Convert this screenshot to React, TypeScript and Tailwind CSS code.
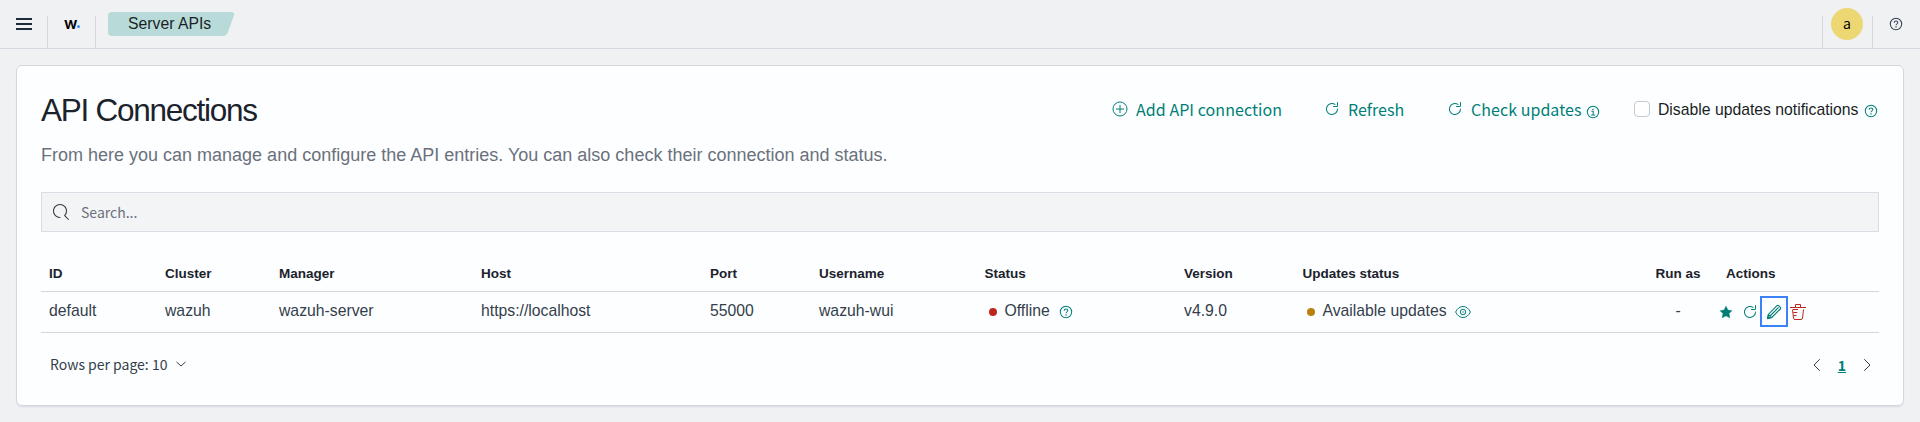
import type { ReactNode } from 'react';

const SOURCE = "font-['Noto_Sans_CJK_JP','Noto_Sans',sans-serif]";

type IconProps = { className?: string; size?: number; children: ReactNode };

function Icon({ className = '', size = 16, children }: IconProps) {
  return (
    <svg width={size} height={size} viewBox="0 0 16 16" fill="none" stroke="currentColor" className={`shrink-0 ${className}`}>
      {children}
    </svg>
  );
}

const Refresh = ({ className }: { className?: string }) => (
  <Icon className={className}>
    <path
      fill="currentColor"
      stroke="none"
      d="M11.228 2.942a.5.5 0 11-.538.842A5 5 0 1013 8a.5.5 0 111 0 6 6 0 11-2.772-5.058zM14 1.5v3A1.5 1.5 0 0112.5 6h-3a.5.5 0 010-1h3a.5.5 0 00.5-.5v-3a.5.5 0 111 0z"
    />
  </Icon>
);

const Help = ({ className }: { className?: string }) => (
  <Icon className={className} size={14}>
    <circle cx="8" cy="8" r="6.5" strokeWidth="1.150" />
    <path d="M5.900 6.500C5.900 5.200 6.800 4.500 8 4.500s2.100.7 2.100 1.900c0 1.400-2.100 1.500-2.100 3.100" strokeWidth="1.150" />
    <path d="M7.300 10.600h1.400v1.300H7.300z" fill="currentColor" stroke="none" />
  </Icon>
);

const Info = ({ className }: { className?: string }) => (
  <Icon className={className} size={14}>
    <circle cx="8" cy="8" r="6.5" strokeWidth="1.150" />
    <path d="M6.200 7.200h2v4.300M5.900 11.500h4.500" strokeWidth="1.150" />
    <path d="M7.200 4.200h1.500v1.400H7.200z" fill="currentColor" stroke="none" />
  </Icon>
);

const columns = [
  { title: 'ID', cell: 'default' },
  { title: 'Cluster', cell: 'wazuh' },
  { title: 'Manager', cell: 'wazuh-server' },
  { title: 'Host', cell: 'https://localhost' },
  { title: 'Port', cell: '55000' },
  { title: 'Username', cell: 'wazuh-wui' },
];

const GRID = 'grid grid-cols-[116px_114px_202px_229px_109px_165.500px_199.500px_118.500px_345.500px_76px_163px] border-b border-[#d3d7dc]';

function HeaderBar() {
  return (
    <header className="flex h-[49px] items-start border-b border-[#d3d7df]">
      <div className="flex h-12 w-12 shrink-0 items-center justify-between">
        <div className="ml-4 flex w-4 flex-col gap-[3px]">
          <div className="h-0.5 bg-[#1f2b3d]" />
          <div className="h-0.5 bg-[#1f2b3d]" />
          <div className="h-0.5 bg-[#1f2b3d]" />
        </div>
        <div className="mt-4 h-8 w-px bg-[#d3d8e0]" />
      </div>
      <div className="flex h-12 w-12 shrink-0 items-center">
        <div className="flex flex-1 items-center pb-0.5 pl-4 font-['Inter',sans-serif] text-base leading-4 font-semibold text-black">
          <span className="w-[12.500px] tracking-[-0.5px]">w</span>
          <span className="mt-[7px] h-[3.500px] w-[3.500px] shrink-0 rounded-full bg-[#3595f9]" />
        </div>
        <div className="mt-4 h-8 w-px bg-[#d3d8e0]" />
      </div>
      <div className="relative mt-3 ml-3 h-6 w-[127px] shrink-0">
        <svg className="absolute inset-0" width="127" height="24">
          <path d="M4 0H123Q127.200 0 126 3.500L120 20Q118.500 24 115 24H4Q0 24 0 20V4Q0 0 4 0Z" fill="#b8dbd9" />
        </svg>
        <div className="relative pl-5 text-[15.750px] leading-[23px] text-[#1a1f26]">Server APIs</div>
      </div>
      <div className="ml-auto flex h-12 items-center">
        <div className="mt-4 h-8 w-px bg-[#d3d8e0]" />
        <div className={`mx-2 flex h-8 w-8 items-center justify-center rounded-full bg-[#edd772] text-sm leading-4 text-black ${SOURCE}`}>
          <span className="pb-0.5">a</span>
        </div>
        <div className="mt-4 ml-px h-8 w-px bg-[#d3d8e0]" />
        <Help className="mr-[17px] ml-[16px] text-[#343f4f]" />
      </div>
    </header>
  );
}

export default function App() {
  return (
    <div className="flex h-[422px] w-[1920px] flex-col overflow-hidden bg-[#f0f1f3] font-['Liberation_Sans',Arial,sans-serif]">
      <HeaderBar />
      <main className="mx-4 mt-4 h-[341px] rounded-md border border-[#d3d8de] bg-[#fdfeff] px-6 shadow-[0_2px_2px_-1px_rgba(152,162,179,0.3)]">
        <div className="mt-[24px] flex h-10 items-center">
          <h1 className="text-[31.5px] leading-10 tracking-[-1.26px] text-[#1a222c]">API Connections</h1>
          <div className={`ml-auto flex items-center pb-[2px] text-base leading-6 text-[#007e77] ${SOURCE}`}>
            <div className="flex w-[212px] items-center">
              <Icon>
                <circle cx="8" cy="8" r="7" />
                <path d="M8 4v8M4 8h8" />
              </Icon>
              <span className="ml-2 tracking-[0.060px]">Add API connection</span>
            </div>
            <div className="flex w-[123px] items-center">
              <Refresh />
              <span className="ml-2">Refresh</span>
            </div>
            <div className="flex w-[187px] items-center">
              <Refresh />
              <span className="ml-2 tracking-[0.050px]">Check updates</span>
              <Info className="mt-[5px] ml-[5px]" />
            </div>
          </div>
          <div className="flex w-[245px] items-center text-[15.750px] leading-6 whitespace-nowrap text-[#1a1f26]">
            <div className="mt-[-2px] h-4 w-4 shrink-0 rounded border border-[#c5c9d0] bg-white" />
            <span className="ml-2">Disable updates notifications</span>
            <Help className="mt-px ml-[5px] text-[#007e77]" />
          </div>
        </div>
        <p className="mt-[12px] text-[18px] leading-[27px] text-[#6a717c]">
          From here you can manage and configure the API entries. You can also check their connection and status.
        </p>
        <div className={`mt-[23px] flex h-10 items-center border border-[#d9dde5] bg-[#f3f4f6] pl-[11px] text-sm text-[#69707d] ${SOURCE}`}>
          <Icon className="text-[#343741]">
            <path
              fill="currentColor"
              stroke="none"
              d="M11.271 11.978l3.872 3.873a.502.502 0 00.708 0 .502.502 0 000-.708l-3.565-3.564c2.38-2.747 2.267-6.923-.342-9.532-2.73-2.73-7.17-2.73-9.898 0-2.728 2.729-2.728 7.17 0 9.9a6.955 6.955 0 004.949 2.05.5.5 0 000-1 5.96 5.96 0 01-4.242-1.757 6.01 6.01 0 010-8.486 6.004 6.004 0 018.484 0 6.01 6.01 0 010 8.486.5.5 0 00.034.738z"
            />
          </Icon>
          <span className="ml-3">Search...</span>
        </div>
        <div className={`mt-[24px] h-[36px] items-center text-[13.500px] leading-5 font-bold text-[#1a222c] ${GRID}`}>
          {columns.map((c) => (
            <div key={c.title} className="pl-2">{c.title}</div>
          ))}
          <div className="pl-2">Status</div>
          <div className="pl-2">Version</div>
          <div className="pl-2">Updates status</div>
          <div className="text-center">Run as</div>
          <div className="pl-[10px]">Actions</div>
        </div>
        <div className={`h-[41px] items-center text-[15.750px] leading-6 text-[#343f4b] ${GRID}`}>
          {columns.map((c) => (
            <div key={c.title} className="pb-0.5 pl-2">{c.cell}</div>
          ))}
          <div className="flex items-center pl-3">
            <span className="h-2 w-2 rounded-full bg-[#bd271e]" />
            <span className="ml-2 pb-0.5">Offline</span>
            <Help className="ml-[9px] text-[#007e77]" />
          </div>
          <div className="pb-0.5 pl-2">v4.9.0</div>
          <div className="flex items-center pl-3">
            <span className="h-2 w-2 rounded-full bg-[#b9810b]" />
            <span className="ml-2 pb-0.5">Available updates</span>
            <Icon className="ml-2 text-[#007e77]">
              <path d="M.6 8C2.200 4.600 4.800 2.500 8 2.500S13.800 4.600 15.400 8C13.800 11.400 11.200 13.500 8 13.500S2.200 11.400.6 8Z" />
              <circle cx="8" cy="8" r="2.750" />
              <circle cx="8" cy="8" r="0.750" fill="currentColor" stroke="none" />
            </Icon>
          </div>
          <div className="pb-0.5 text-center">-</div>
          <div className="mt-[-1px] flex items-center pl-[2px] text-[#017d73]">
            <Icon className="mt-px">
              <path d="M8 2.200l1.900 3.900 4 .6-2.900 2.900.8 4.200L8 11.800 4.200 13.800l.8-4.200-2.900-2.900 4-.6z" fill="currentColor" strokeWidth="0.500" />
            </Icon>
            <Refresh className="ml-2" />
            <div className="ml-[2px] flex h-[31px] w-7 shrink-0 items-center justify-center border-2 border-[#3b82f6]">
              <Icon>
                <path d="M11 1.700L2.300 10.400 1.500 14.500l4.100-.8L14.300 5a1.200 1.200 0 0 0 0-1.700L12.700 1.700a1.200 1.200 0 0 0-1.700 0ZM12.600 3.400L4 12M2.300 10.500L5.500 13.700" strokeWidth="1.100" />
                <path d="M1.200 14.800l.6-3.400 2.800 2.800z" fill="currentColor" stroke="none" />
              </Icon>
            </div>
            <Icon className="ml-[2px] text-[#bd271e]">
              <path d="M0 3.500h16M5.500 3.500V.5h5v3M2.500 5.500l1 8.500q.2 1.500 1.500 1.500h6q1.300 0 1.500-1.500l1-8.500M3 5.500h5M3.300 8.500h4M3.600 11.500h3" />
            </Icon>
          </div>
        </div>
        <div className={`mt-[19px] flex h-6 items-center justify-between text-sm leading-6 text-[#343f4b] ${SOURCE}`}>
          <div className="flex items-center pl-[9px]">
            <span>Rows per page: 10</span>
            <Icon className="ml-[6px]">
              <path d="M3.800 6.200L8 10l4.200-3.800" strokeLinecap="round" />
            </Icon>
          </div>
          <div className="flex items-center pt-px pr-1">
            <Icon>
              <path d="M10.500 2.500L5 8l5.500 5.500" strokeLinecap="round" />
            </Icon>
            <span className="mx-[13px] font-bold text-[#007e77] underline">1</span>
            <Icon>
              <path d="M5.500 2.500L11 8l-5.500 5.500" strokeLinecap="round" />
            </Icon>
          </div>
        </div>
      </main>
    </div>
  );
}
